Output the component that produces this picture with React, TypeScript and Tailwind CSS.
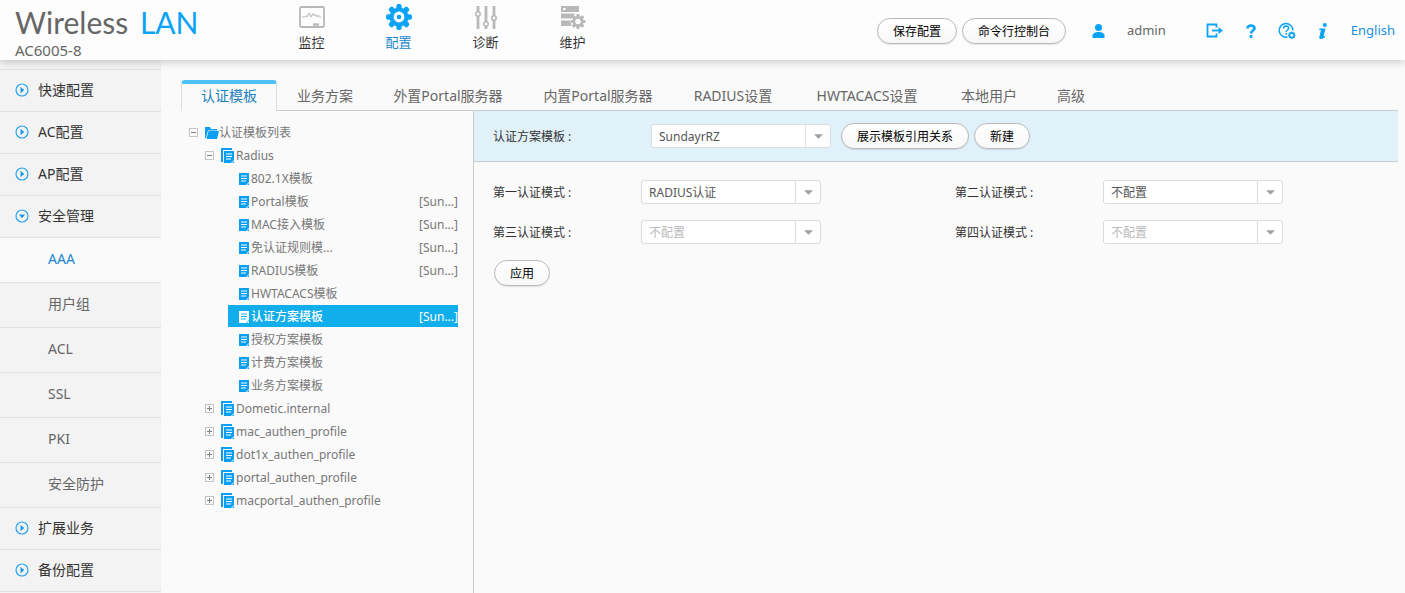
import type { ReactNode } from "react";

const menuItems = [
    { label: "快速配置" },
    { label: "AC配置" },
    { label: "AP配置" },
    { label: "安全管理", children: ["AAA", "用户组", "ACL", "SSL", "PKI", "安全防护"] },
    { label: "扩展业务" },
    { label: "备份配置" },
];

const tabs = [
    { label: "认证模板", width: "w-24" },
    { label: "业务方案", width: "w-24" },
    { label: "外置Portal服务器", width: "w-[150px]" },
    { label: "内置Portal服务器", width: "w-[150px]" },
    { label: "RADIUS设置", width: "w-[120px]" },
    { label: "HWTACACS设置", width: "w-[148px]" },
    { label: "本地用户", width: "w-24" },
    { label: "高级", width: "w-[68px]" },
];

const templates = [
    { label: "802.1X模板" },
    { label: "Portal模板", ref: "[Sun...]" },
    { label: "MAC接入模板", ref: "[Sun...]" },
    { label: "免认证规则模...", ref: "[Sun...]" },
    { label: "RADIUS模板", ref: "[Sun...]" },
    { label: "HWTACACS模板" },
    { label: "认证方案模板", ref: "[Sun...]", selected: true },
    { label: "授权方案模板" },
    { label: "计费方案模板" },
    { label: "业务方案模板" },
];

const profiles = [
    "Dometic.internal",
    "mac_authen_profile",
    "dot1x_authen_profile",
    "portal_authen_profile",
    "macportal_authen_profile",
];

function MonitorIcon() {
    return (
        <svg width="26" height="26" viewBox="0 0 26 26" fill="none" stroke="#b8b8b8">
            <rect x="1" y="3" width="24" height="20" rx="1.500" strokeWidth="1.800" />
            <path d="M3 13h2l1.500-1L8 13l2-4 2 4 2-3.500L15.500 12l1-2 1.500 3 1.500-2 1 2H22" strokeWidth="1" />
            <path d="M14 20.500h6" strokeWidth="2.400" />
        </svg>
    );
}

function GearIcon() {
    return (
        <svg width="26" height="26" viewBox="0 0 26 26" fill="#0aa3f5">
            {[0, 45, 90, 135].map((angle) => (
                <rect key={angle} x="10.300" y="0" width="5.400" height="26" rx="2" transform={`rotate(${angle} 13 13)`} />
            ))}
            <circle cx="13" cy="13" r="9.500" />
            <circle cx="13" cy="13" r="5.400" fill="#fff" />
            <circle cx="13" cy="13" r="2.300" />
        </svg>
    );
}

function SlidersIcon() {
    return (
        <svg width="26" height="26" viewBox="0 0 26 26" fill="none" stroke="#b8b8b8">
            <path d="M5 2v6M5 12v13M13 2v16M13 22v3M21 2v10M21 16v9" strokeWidth="2.800" />
            <circle cx="5" cy="10" r="2.200" strokeWidth="1.600" />
            <circle cx="13" cy="20" r="2.200" strokeWidth="1.600" />
            <circle cx="21" cy="14" r="2.200" strokeWidth="1.600" />
        </svg>
    );
}

function MaintainIcon() {
    return (
        <svg width="26" height="26" viewBox="0 0 26 26" fill="#b8b8b8">
            <path d="M1 2h18v6H1zM1 9.500h14l-3 5H1zM1 16.500h9l1.500 5.500H1z" />
            <path d="M3 4h2.500v2H3z" fill="#fff" />
            {[0, 45, 90, 135].map((angle) => (
                <rect key={angle} x="16.400" y="10" width="3.200" height="15" rx="1" transform={`rotate(${angle} 18 17.500)`} />
            ))}
            <circle cx="18" cy="17.500" r="5.500" />
            <circle cx="18" cy="17.500" r="2.700" fill="#fff" />
        </svg>
    );
}

function ArrowCircle({ open }: { open?: boolean }) {
    return (
        <svg width="14" height="14" viewBox="0 0 14 14" fill="none">
            <circle cx="7" cy="7" r="6" stroke="#2ba3ec" strokeWidth="1.200" />
            <path d={open ? "M3.800 5.500h6.400L7 9.300z" : "M5.500 3.800v6.400L9.300 7z"} fill="#1a9bea" />
        </svg>
    );
}

function FolderIcon() {
    return (
        <svg width="14" height="12" viewBox="0 0 14 12" fill="#0a9ff0">
            <path d="M0 0h5l1 2h6v1.500H3L1 11H0z" />
            <path d="M3.500 4H14l-2 8H1.500z" />
        </svg>
    );
}

function ProfileIcon() {
    return (
        <svg className="mr-px" width="14" height="16" viewBox="0 0 14 16" fill="#0a9ff0">
            <path d="M0 0h11v2H2v12H0z" />
            <path d="M3 3h10v9l-3 3H3z" />
            <path d="M5 6h6M5 8.500h6M5 11h5" stroke="#fff" strokeWidth="1" />
            <path d="M13 13v2h-2z" />
        </svg>
    );
}

function PageIcon() {
    return (
        <svg width="10" height="12" viewBox="0 0 10 12">
            <path d="M0 0h10v9l-3 3H0z" fill="currentColor" />
            <path d="M10 10v2H8z" fill="currentColor" />
            <path className="stroke-[#fafafa] group-aria-selected:stroke-[#12aeec]" d="M2 3h6M2 5.500h6M2 8h5" strokeWidth="1" />
        </svg>
    );
}

function Expander({ open, label }: { open?: boolean; label: string }) {
    return (
        <button type="button" aria-label={label} aria-expanded={!!open} className="w-4 shrink-0">
            <svg width="9" height="9" viewBox="0 0 9 9" fill="none">
                <rect x="0.500" y="0.500" width="8" height="8" stroke="#c4c4c4" />
                <path d={open ? "M2 4.500h5" : "M2 4.500h5M4.500 2v5"} stroke="#808080" />
            </svg>
        </button>
    );
}

function PillButton({ children }: { children: ReactNode }) {
    return (
        <button
            type="button"
            className="h-[26px] shrink-0 rounded-full border border-[#b9b9b9] bg-linear-to-b from-white to-[#f8f8f8] px-[15px] pt-px text-xs text-black shadow-[0_1px_1px_rgba(0,0,0,0.1)]"
        >
            {children}
        </button>
    );
}

interface SelectProps {
    id: string;
    value: string;
    disabled?: boolean;
}

function Select({ id, value, disabled }: SelectProps) {
    return (
        <div className="relative w-[180px] shrink-0">
            <select
                id={id}
                disabled={disabled}
                className="h-6 w-full appearance-none rounded-[3px] border border-[#dcdcdc] bg-white pt-px pr-7 pl-[7px] text-xs text-[#555] disabled:text-[#bbb] disabled:opacity-100"
            >
                <option>{value}</option>
            </select>
            <span className="pointer-events-none absolute inset-y-px right-0 flex w-[26px] items-center justify-center border-l border-[#dcdcdc]">
                <svg width="9" height="5" viewBox="0 0 10 5" fill="#a0a0a0">
                    <path d="M0 0h10L5 5z" />
                </svg>
            </span>
        </div>
    );
}

function Field({ id, label, value, disabled }: SelectProps & { label: string }) {
    return (
        <div className="flex items-center pl-[19px]">
            <label htmlFor={id} className="w-[148px] shrink-0 pt-px">
                {label}
            </label>
            <Select id={id} value={value} disabled={disabled} />
        </div>
    );
}

function Header() {
    const nav = [
        { label: "监控", icon: <MonitorIcon /> },
        { label: "配置", icon: <GearIcon />, active: true },
        { label: "诊断", icon: <SlidersIcon /> },
        { label: "维护", icon: <MaintainIcon /> },
    ];

    return (
        <header className="relative z-10 flex h-[60px] shrink-0 bg-[#fdfdfd] shadow-[0_2px_8px_rgba(0,0,0,0.2)]">
            <div className="w-[268px] shrink-0 pl-[15px]">
                <h1 className="mt-1 font-[Lato] text-[30px] leading-9 text-[#666]">
                    Wireless <span className="ml-1 text-[#0aa3f5]">LAN</span>
                </h1>
                <p className="text-[15px] leading-5 text-[#666]">AC6005-8</p>
            </div>

            <nav className="flex">
                {nav.map((item) => (
                    <a
                        key={item.label}
                        href="#"
                        className={`flex w-[87px] flex-col items-center gap-1 pt-1 text-[13px] leading-4 ${item.active ? "text-[#1787cc]" : "text-[#333]"}`}
                    >
                        {item.icon}
                        {item.label}
                    </a>
                ))}
            </nav>

            {/* Account and tools */}
            <div className="ml-auto flex items-center pt-[2px] pr-[10px] text-[13px] text-[#2090dd]">
                <div className="flex gap-[5px]">
                    <PillButton>保存配置</PillButton>
                    <PillButton>命令行控制台</PillButton>
                </div>
                <svg className="ml-[26px]" width="13" height="14" viewBox="0 0 13 14" fill="#0aa3f5">
                    <circle cx="6.500" cy="3.500" r="3.500" />
                    <path d="M0.500 14v-2.500C0.500 9.500 3 8 6.500 8s6 1.500 6 3.500V14z" />
                </svg>
                <span className="ml-[22px] text-[#666]">admin</span>
                <a href="#" aria-label="注销" className="ml-10">
                    <svg width="18" height="16" viewBox="0 0 18 16" fill="none" stroke="#0aa3f5" strokeWidth="1.800">
                        <path d="M10.500 4.500V1.500H1.500v12h9v-3" />
                        <path d="M6 7.500h8" />
                        <path d="M12.500 4L17 7.500 12.500 11z" fill="#0aa3f5" stroke="none" />
                    </svg>
                </a>
                <a href="#" aria-label="帮助" className="ml-[22px]">
                    <svg width="10" height="14" viewBox="0 0 10 14" fill="none" stroke="#0aa3f5" strokeWidth="2.600">
                        <path d="M1.500 4.500C1.500 2.500 3 1.500 5 1.500s3.500 1 3.500 2.800C8.500 6.500 5 6.500 5 9.500" />
                        <path d="M5 11v3" />
                    </svg>
                </a>
                <a href="#" aria-label="在线支持" className="ml-[22px]">
                    <svg width="18" height="18" viewBox="0 0 18 18" fill="none" stroke="#0aa3f5">
                        <path d="M14.800 8.500A6.800 6.800 0 1 0 9.500 15" strokeWidth="1.500" />
                        <path d="M5.500 6.500C5.500 5 6.600 4 8 4S10.600 5 10.600 6.300C10.600 8 8.200 8 8.200 10M8.200 11v1.800" strokeWidth="1.500" />
                        <circle cx="13.800" cy="13.300" r="2.400" strokeWidth="1.800" />
                        <path d="M13.800 9.500v7.600M10 13.300h7.600M11.100 10.600l5.400 5.400M16.500 10.600l-5.400 5.400" strokeWidth="1" />
                        <circle cx="13.800" cy="13.300" r="1.400" fill="#fdfdfd" stroke="none" />
                    </svg>
                </a>
                <a href="#" aria-label="关于" className="ml-[22px]">
                    <svg width="10" height="16" viewBox="0 0 10 16" fill="#0aa3f5">
                        <circle cx="6.800" cy="2" r="2" />
                        <path d="M1.500 5.500h6L5.500 13.500l2-1-.5 1.500C5.500 15.500 4 16 2.500 16 1.500 16 1 15 1.300 14L3 7H1z" />
                    </svg>
                </a>
                <a href="#" className="ml-[23px]">
                    English
                </a>
            </div>
        </header>
    );
}

function Sidebar() {
    return (
        <nav className="w-[161px] shrink-0 bg-[#f3f3f3] pt-[9px] text-sm">
            <ul className="border-t border-[#e0e0e0]">
                {menuItems.map((item) => (
                    <li key={item.label}>
                        <a href="#" className="flex h-[42px] items-center gap-[9px] border-b border-[#e0e0e0] pb-px pl-[15px] text-[#333]">
                            <ArrowCircle open={!!item.children} />
                            {item.label}
                        </a>
                        {item.children && (
                            <ul>
                                {item.children.map((child, i) => (
                                    <li key={child}>
                                        <a
                                            href="#"
                                            className={`flex h-[45px] items-center border-b border-[#e0e0e0] pb-[3px] pl-12 ${i === 0 ? "bg-[#fafafa] text-[#2088d2]" : "text-[#666]"}`}
                                        >
                                            {child}
                                        </a>
                                    </li>
                                ))}
                            </ul>
                        )}
                    </li>
                ))}
            </ul>
        </nav>
    );
}

function TemplateTree() {
    return (
        <ul role="tree" className="w-[293px] shrink-0 border-r border-[#ccc] pt-[10px] pr-[15px] pl-2 text-xs text-[#777]">
            <li role="treeitem" aria-expanded="true">
                <div className="flex h-[23px] items-center">
                    <Expander open label="认证模板列表" />
                    <FolderIcon />
                    认证模板列表
                </div>
                <ul role="group" className="pl-4">
                    <li role="treeitem" aria-expanded="true">
                        <div className="flex h-[23px] items-center">
                            <Expander open label="Radius" />
                            <ProfileIcon />
                            Radius
                        </div>
                        <ul role="group" className="pl-[23px]">
                            {templates.map((item) => (
                                <li
                                    key={item.label}
                                    role="treeitem"
                                    aria-selected={!!item.selected}
                                    className="group mb-px flex h-[22px] items-center gap-[2px] pt-[2px] pl-[11px] text-[#0a9ff0] aria-selected:bg-[#12aeec] aria-selected:text-white"
                                >
                                    <PageIcon />
                                    <span className={item.selected ? "font-medium" : "text-[#777]"}>{item.label}</span>
                                    {item.ref && (
                                        <span className={item.selected ? "ml-auto" : "ml-auto text-[#777]"}>{item.ref}</span>
                                    )}
                                </li>
                            ))}
                        </ul>
                    </li>
                    {profiles.map((name) => (
                        <li key={name} role="treeitem" aria-expanded="false">
                            <div className="flex h-[23px] items-center">
                                <Expander label={name} />
                                <ProfileIcon />
                                {name}
                            </div>
                        </li>
                    ))}
                </ul>
            </li>
        </ul>
    );
}

export default function App() {
    return (
        <div className="flex min-h-screen flex-col bg-[#fafafa] font-['Noto_Sans','Noto_Sans_CJK_SC',sans-serif]">
            <Header />

            <div className="flex flex-1">
                <Sidebar />

                <main className="flex min-w-0 flex-1 flex-col pt-5 pr-[7px] pl-5">
                    {/* Tabs */}
                    <div role="tablist" className="flex h-[31px] border-b border-[#ccc] text-sm">
                        {tabs.map((tab, i) => (
                            <button
                                key={tab.label}
                                type="button"
                                role="tab"
                                aria-selected={i === 0}
                                className={`shrink-0 whitespace-nowrap ${tab.width} ${
                                    i === 0
                                        ? "-mb-px h-[31px] rounded-t border-x border-t-4 border-x-[#ddd] border-t-[#4fc3f7] bg-[#fafafa] pb-[3px] text-[#2080c0]"
                                        : "pt-px text-[#666]"
                                }`}
                            >
                                {tab.label}
                            </button>
                        ))}
                    </div>

                    <div className="flex flex-1">
                        <TemplateTree />

                        <section className="min-w-0 flex-1 text-xs text-[#333]">
                            <div className="flex h-[51px] items-center border-b border-[#ccc] bg-[#e1f1f9] px-[19px]">
                                <label htmlFor="scheme" className="w-[158px] shrink-0 pt-px">
                                    认证方案模板 :
                                </label>
                                <Select id="scheme" value="SundayrRZ" />
                                <div className="ml-[10px] flex gap-[5px]">
                                    <PillButton>展示模板引用关系</PillButton>
                                    <PillButton>新建</PillButton>
                                </div>
                            </div>

                            <form className="pt-[18px]">
                                <div className="grid grid-cols-2 gap-y-4">
                                    <Field id="mode1" label="第一认证模式 :" value="RADIUS认证" />
                                    <Field id="mode2" label="第二认证模式 :" value="不配置" />
                                    <Field id="mode3" label="第三认证模式 :" value="不配置" disabled />
                                    <Field id="mode4" label="第四认证模式 :" value="不配置" disabled />
                                </div>
                                <div className="mt-4 pl-5">
                                    <PillButton>应用</PillButton>
                                </div>
                            </form>
                        </section>
                    </div>
                </main>
            </div>
        </div>
    );
}
